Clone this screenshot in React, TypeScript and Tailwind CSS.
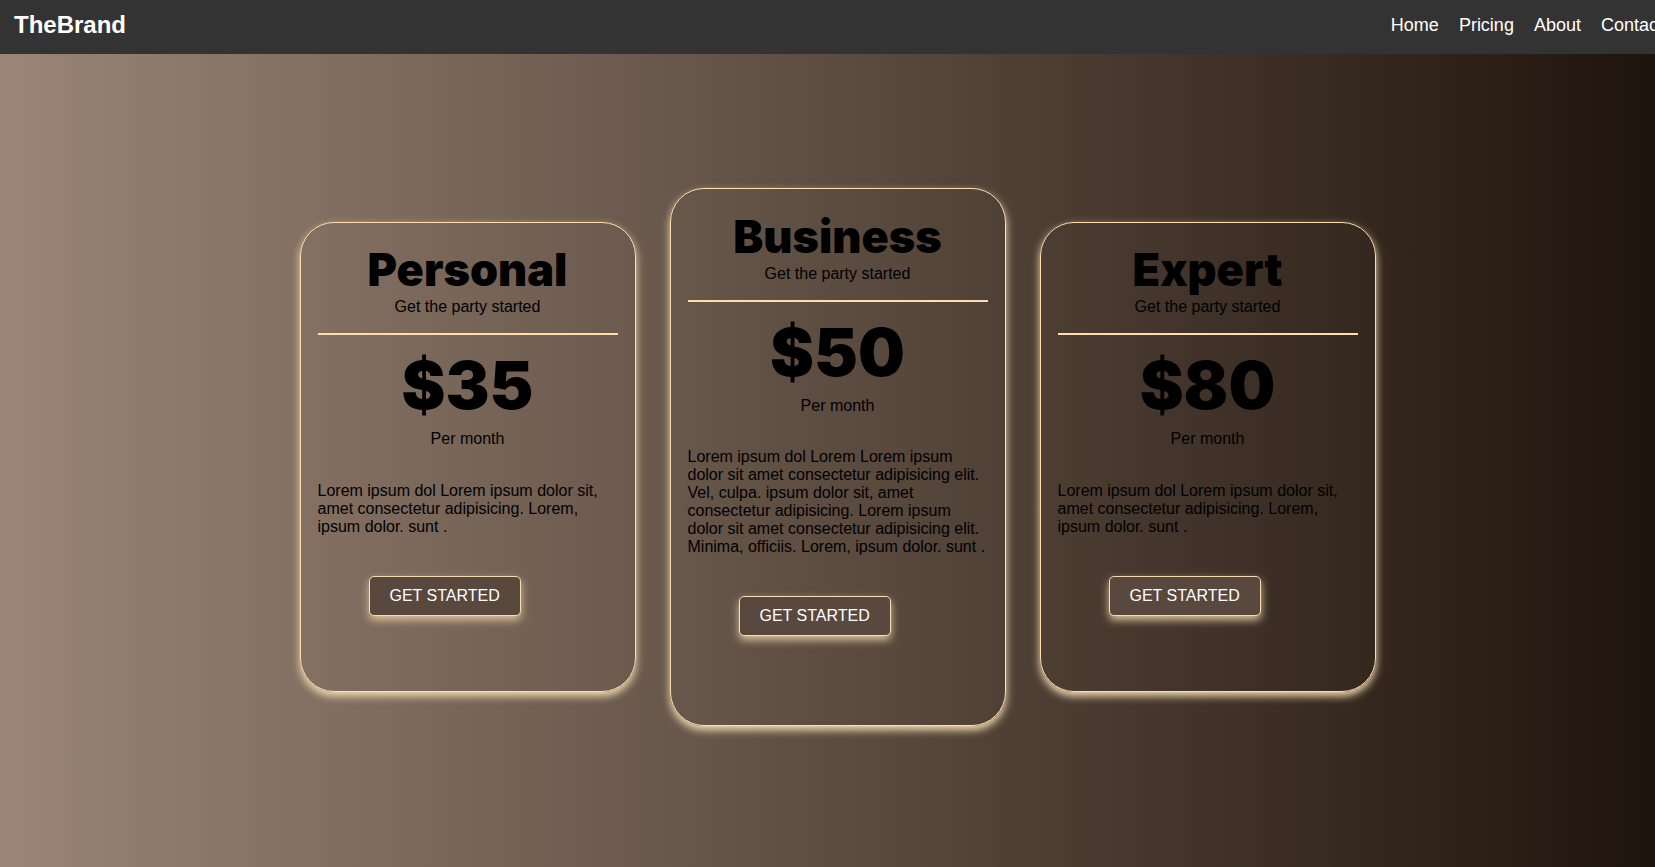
type Plan = {
  name: string;
  price: string;
  text: string;
  featured?: boolean;
};

const plans: Plan[] = [
  {
    name: "Personal",
    price: "$35",
    text: "Lorem ipsum dol Lorem ipsum dolor sit, amet consectetur adipisicing. Lorem, ipsum dolor. sunt .",
  },
  {
    name: "Business",
    price: "$50",
    text: "Lorem ipsum dol Lorem Lorem ipsum dolor sit amet consectetur adipisicing elit. Vel, culpa. ipsum dolor sit, amet consectetur adipisicing. Lorem ipsum dolor sit amet consectetur adipisicing elit. Minima, officiis. Lorem, ipsum dolor. sunt .",
    featured: true,
  },
  {
    name: "Expert",
    price: "$80",
    text: "Lorem ipsum dol Lorem ipsum dolor sit, amet consectetur adipisicing. Lorem, ipsum dolor. sunt .",
  },
];

const links = ["Home", "Pricing", "About", "Contact"];

function Navbar() {
  return (
    <header className="flex h-[54px] items-start justify-between bg-[#333] pt-[11px] pr-3 pl-[14px] text-white">
      <a href="#" className="text-2xl leading-[28px] font-bold">
        TheBrand
      </a>
      <nav className="flex gap-5 text-lg leading-[28px]">
        {links.map((link) => (
          <a key={link} href={`#${link.toLowerCase()}`}>
            {link}
          </a>
        ))}
      </nav>
    </header>
  );
}

function PlanCard({ plan }: { plan: Plan }) {
  return (
    <section
      className={`w-[336px] rounded-[34px] border border-[#ffdead] px-[17px] shadow-[0_4px_8px_#f5deb3] ${
        plan.featured ? "pt-[18px] pb-[89px]" : "pt-[17px] pb-[75px]"
      }`}
    >
      <h2 className="pt-[2px] text-center font-['Arial_Black','Inter',sans-serif] text-[45px] leading-[56px] font-black">
        {plan.name}
      </h2>
      <p className="text-center">Get the party started</p>
      <hr className="mt-[17px] border-t-2 border-[#ffdead]" />
      <p className="pt-[5px] text-center font-['Arial_Black','Inter',sans-serif] text-[66px] leading-[90px] font-black">
        {plan.price}
      </p>
      <p className="text-center">Per month</p>
      <p className={plan.featured ? "mt-[33px]" : "mt-[34px]"}>{plan.text}</p>
      <button
        type="button"
        className="mt-10 ml-[51px] block h-10 rounded-[5px] border border-[#f5deb3] bg-[#59483e] px-5 pb-px text-white shadow-[0_4px_8px_#dcc49a]"
      >
        GET STARTED
      </button>
    </section>
  );
}

export default function App() {
  return (
    <div className="min-h-screen overflow-hidden bg-linear-to-r/srgb from-[#9a8576] to-[#1f140c] font-['Liberation_Sans',Arial,sans-serif] text-base leading-[18px] text-black">
      <div className="w-[calc(100%+20px)]">
        <Navbar />
        <main className="flex items-center justify-center gap-[34px] py-[134px]">
          {plans.map((plan) => (
            <PlanCard key={plan.name} plan={plan} />
          ))}
        </main>
      </div>
    </div>
  );
}
